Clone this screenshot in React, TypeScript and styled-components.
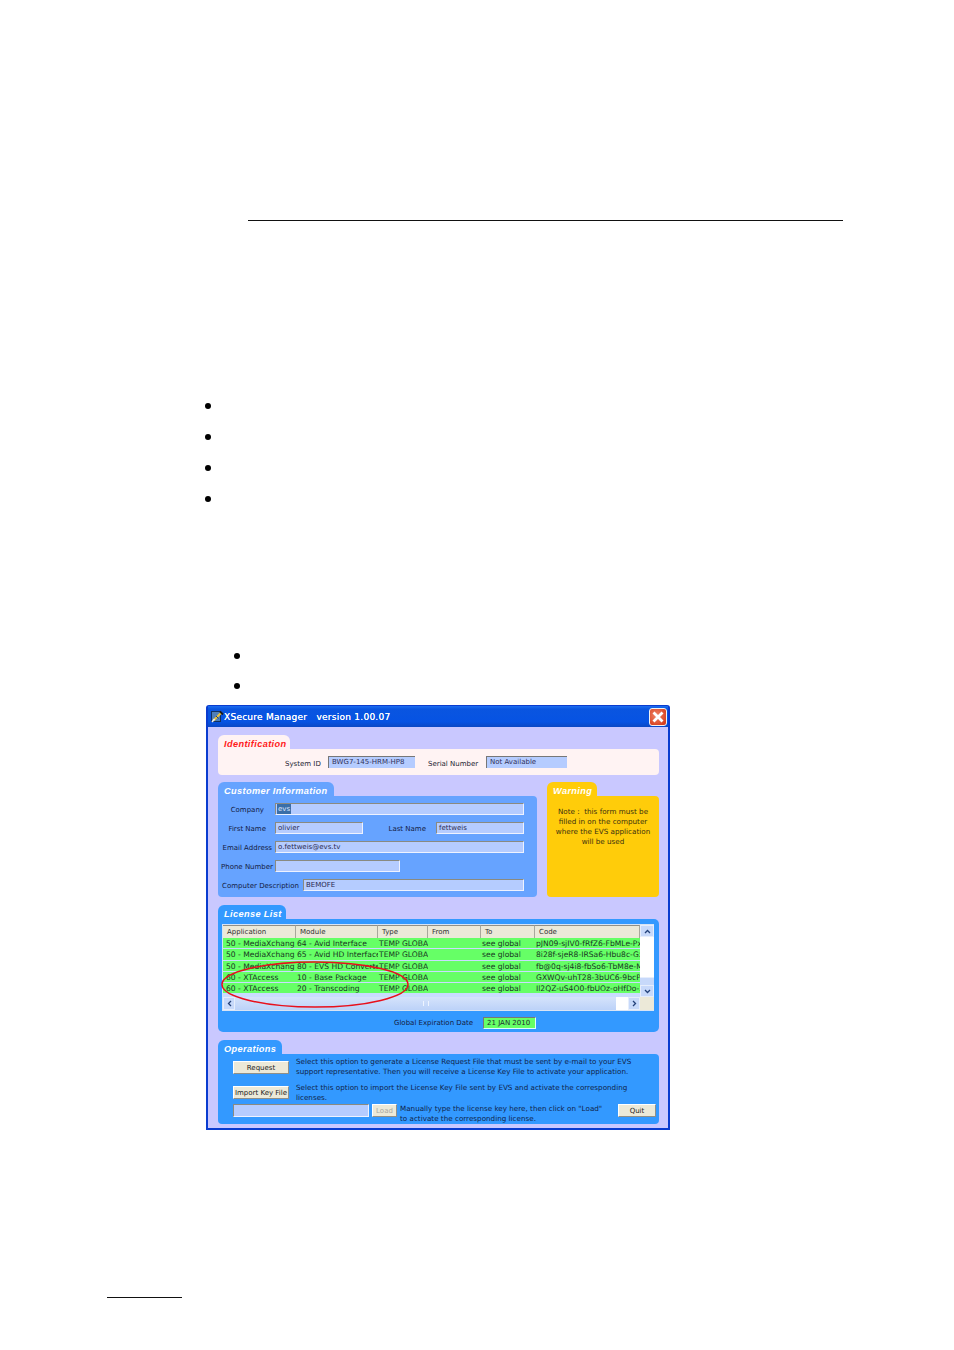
import React from 'react';
import styled, { createGlobalStyle } from 'styled-components';

const GlobalStyle = createGlobalStyle`
  html, body { margin: 0; padding: 0; background: #fff; }
  body { font-family: "DejaVu Sans", "Liberation Sans", sans-serif; }
`;

interface LicenseRow {
  application: string;
  module: string;
  type: string;
  to: string;
  code: string;
}

const licenseRows: LicenseRow[] = [
  { application: '50 - MediaXchang', module: '64 - Avid Interface', type: 'TEMP GLOBAL', to: 'see global', code: 'pJN09-sjIV0-fRfZ6-FbMLe-PxT2' },
  { application: '50 - MediaXchang', module: '65 - Avid HD Interface', type: 'TEMP GLOBAL', to: 'see global', code: '8i28f-sjeR8-IRSa6-Hbu8c-GxT2' },
  { application: '50 - MediaXchang', module: '80 - EVS HD Converter', type: 'TEMP GLOBAL', to: 'see global', code: 'fb@0q-sj4i8-fbSo6-TbM8e-MxT2' },
  { application: '60 - XTAccess', module: '10 - Base Package', type: 'TEMP GLOBAL', to: 'see global', code: 'GXWQv-uhT28-3bUC6-9bcPe-3xT2' },
  { application: '60 - XTAccess', module: '20 - Transcoding', type: 'TEMP GLOBAL', to: 'see global', code: 'Il2QZ-uS4O0-fbUOz-oHfDo-2xT2' },
];

const columns = '73px 82px 50px 53px 54px 105px';

const App: React.FC = () => (
  <Page>
    <GlobalStyle />
    <HeaderRule />
    <BulletList>
      <Bullet />
      <Bullet />
      <Bullet />
      <Bullet />
    </BulletList>
    <SubBulletList>
      <Bullet />
      <Bullet />
    </SubBulletList>

    <Window>
      <TitleBar>
        <svg width="13" height="13" viewBox="0 0 13 13">
          <rect x="0.5" y="1.5" width="9" height="10" fill="#4f7fb8" stroke="#12305f" />
          <path d="M2.5 10.5 L10 3" stroke="#e9c23c" strokeWidth="2.2" />
          <path d="M9 1.5 L12 4.5" stroke="#1b1b1b" strokeWidth="1.8" />
          <path d="M1 12 L3.5 9" stroke="#e8eef8" strokeWidth="1.6" />
          <path d="M5 6 L7.5 8.5" stroke="#26406e" strokeWidth="1" />
        </svg>
        <TitleText>XSecure Manager&nbsp;&nbsp; version 1.00.07</TitleText>
        <CloseButton>
          <svg width="12" height="12" viewBox="0 0 12 12">
            <path d="M1.5 1.5 L10.5 10.5 M10.5 1.5 L1.5 10.5" stroke="#fff" strokeWidth="2.8" />
          </svg>
        </CloseButton>
      </TitleBar>

      <WindowBody>
        <Section>
          <Tab $bg="#fff3f3" $fg="#ff1a1a" $w={72}>Identification</Tab>
          <IdentPanel>
            <FieldLabel>System ID</FieldLabel>
            <ReadOnlyField $w={87}>BWG7-145-HRM-HP8</ReadOnlyField>
            <SerialLabel>Serial Number</SerialLabel>
            <ReadOnlyField $w={81}>Not Available</ReadOnlyField>
          </IdentPanel>
        </Section>

        <MiddleRow>
          <CustomerSection>
            <Tab $bg="#66a3ff" $fg="#fff" $w={116}>Customer Information</Tab>
            <CustomerPanel>
              <FormRow>
                <FormLabel $w={57} $pad={11}>Company</FormLabel>
                <TextInput $w={249}><Selected>evs</Selected></TextInput>
              </FormRow>
              <FormRow>
                <FormLabel $w={57} $pad={9}>First Name</FormLabel>
                <TextInput $w={88}>olivier</TextInput>
                <FormLabel $w={73} $pad={10}>Last Name</FormLabel>
                <TextInput $w={88}>fettweis</TextInput>
              </FormRow>
              <FormRow>
                <FormLabel $w={57} $pad={3}>Email Address</FormLabel>
                <TextInput $w={249}>o.fettweis@evs.tv</TextInput>
              </FormRow>
              <FormRow>
                <FormLabel $w={57} $pad={2}>Phone Number</FormLabel>
                <TextInput $w={125} />
              </FormRow>
              <FormRow>
                <FormLabel $w={85} $pad={4}>Computer Description</FormLabel>
                <TextInput $w={221}>BEMOFE</TextInput>
              </FormRow>
            </CustomerPanel>
          </CustomerSection>

          <WarningSection>
            <Tab $bg="#ffcc0a" $fg="#fff" $w={50}>Warning</Tab>
            <WarningPanel>
              Note :&nbsp; this form must be
              <br />
              filled in on the computer
              <br />
              where the EVS application
              <br />
              will be used
            </WarningPanel>
          </WarningSection>
        </MiddleRow>

        <Section>
          <Tab $bg="#3399ff" $fg="#fff" $w={68}>License List</Tab>
          <LicensePanel>
            <TableFrame>
              <TableMain>
                <HeaderRow>
                  <HeaderCell>Application</HeaderCell>
                  <HeaderCell>Module</HeaderCell>
                  <HeaderCell>Type</HeaderCell>
                  <HeaderCell>From</HeaderCell>
                  <HeaderCell>To</HeaderCell>
                  <HeaderCell>Code</HeaderCell>
                </HeaderRow>
                {licenseRows.map((row) => (
                  <DataRow key={row.module}>
                    <Cell>{row.application}</Cell>
                    <Cell>{row.module}</Cell>
                    <Cell>{row.type}</Cell>
                    <Cell />
                    <Cell>{row.to}</Cell>
                    <Cell>{row.code}</Cell>
                  </DataRow>
                ))}
              </TableMain>
              <VerticalBar>
                <ScrollButton $h={12}>
                  <svg width="7" height="5" viewBox="0 0 7 5"><path d="M1 4 L3.5 1.5 L6 4" fill="none" stroke="#24427a" strokeWidth="1.3" /></svg>
                </ScrollButton>
                <VerticalTrack />
                <VerticalThumb />
                <ScrollButton $h={12}>
                  <svg width="7" height="5" viewBox="0 0 7 5"><path d="M1 1 L3.5 3.5 L6 1" fill="none" stroke="#24427a" strokeWidth="1.3" /></svg>
                </ScrollButton>
              </VerticalBar>
              <HorizontalBar>
                <ScrollButton $w={12}>
                  <svg width="5" height="7" viewBox="0 0 5 7"><path d="M4 1 L1.5 3.5 L4 6" fill="none" stroke="#24427a" strokeWidth="1.3" /></svg>
                </ScrollButton>
                <HorizontalThumb>
                  <Grip />
                </HorizontalThumb>
                <ScrollButton $w={12}>
                  <svg width="5" height="7" viewBox="0 0 5 7"><path d="M1 1 L3.5 3.5 L1 6" fill="none" stroke="#24427a" strokeWidth="1.3" /></svg>
                </ScrollButton>
                <ScrollCorner />
              </HorizontalBar>
              <RedCircle width="192" height="52" viewBox="0 0 192 52">
                <ellipse cx="96" cy="25.5" rx="93" ry="22.5" fill="none" stroke="#e8101c" strokeWidth="1.5" />
              </RedCircle>
            </TableFrame>
            <ExpirationRow>
              <span>Global Expiration Date</span>
              <ExpirationField>21 JAN 2010</ExpirationField>
            </ExpirationRow>
          </LicensePanel>
        </Section>

        <Section>
          <Tab $bg="#3399ff" $fg="#fff" $w={64}>Operations</Tab>
          <OperationsPanel>
            <OperationRow $h={26}>
              <WinButton $w={56}>Request</WinButton>
              <OperationText>
                Select this option to generate a License Request File that must be sent by e-mail to your EVS
                <br />
                support representative. Then you will receive a License Key File to activate your application.
              </OperationText>
            </OperationRow>
            <OperationRow $h={25}>
              <WinButton $w={56}>Import Key File</WinButton>
              <OperationText $top={1}>
                Select this option to import the License Key File sent by EVS and activate the corresponding
                <br />
                licenses.
              </OperationText>
            </OperationRow>
            <LastRow>
              <KeyInput />
              <WinButton $w={25} $disabled>Load</WinButton>
              <ManualText>
                Manually type the license key here, then click on "Load"
                <br />
                to activate the corresponding license.
              </ManualText>
              <QuitButton $w={38}>Quit</QuitButton>
            </LastRow>
          </OperationsPanel>
        </Section>
      </WindowBody>
    </Window>

    <FooterRule />
  </Page>
);

const Page = styled.div`
  width: 954px;
  height: 1350px;
  overflow: hidden;
  padding-top: 220px;
  box-sizing: border-box;
`;

const HeaderRule = styled.div`
  width: 595px;
  height: 1px;
  margin-left: 248px;
  background: #111;
`;

const BulletList = styled.div`
  display: flex;
  flex-direction: column;
  gap: 25px;
  margin: 182px 0 0 205px;
`;

const SubBulletList = styled.div`
  display: flex;
  flex-direction: column;
  gap: 24px;
  margin: 151px 0 0 234px;
`;

const Bullet = styled.div`
  width: 6px;
  height: 6px;
  border-radius: 50%;
  background: #000;
`;

const Window = styled.div`
  width: 464px;
  height: 425px;
  margin: 16px 0 0 206px;
  box-sizing: border-box;
  border: 2px solid #0a3ccf;
  border-top-width: 1px;
  border-radius: 3px 3px 0 0;
  background: #c9c8ff;
  display: flex;
  flex-direction: column;
`;

const TitleBar = styled.div`
  height: 21px;
  flex: none;
  display: flex;
  align-items: center;
  padding: 0 1px 0 3px;
  background: linear-gradient(180deg, #1c6df0 0%, #0a55e0 15%, #0653e3 75%, #0a48c4 100%);
`;

const TitleText = styled.span`
  flex: 1;
  padding-top: 1px;
  font-size: 9px;
  font-weight: 500;
  letter-spacing: 0.25px;
  color: #fff;
  white-space: nowrap;
  text-shadow: 0 0 0.5px #fff;
`;

const CloseButton = styled.div`
  width: 18px;
  height: 18px;
  box-sizing: border-box;
  border: 1px solid #f2f2f2;
  border-radius: 3px;
  background: radial-gradient(circle at 40% 40%, #f0886a, #d8401f 80%);
  display: flex;
  align-items: center;
  justify-content: center;
`;

const WindowBody = styled.div`
  flex: 1;
  display: flex;
  flex-direction: column;
  gap: 8px;
  padding: 8px 9px 4px 10px;
`;

const Section = styled.section`
  display: flex;
  flex-direction: column;
`;

const Tab = styled.div<{ $bg: string; $fg: string; $w: number }>`
  width: ${(p) => p.$w}px;
  height: 15px;
  margin-bottom: -1px;
  box-sizing: border-box;
  padding: 3px 0 0 6px;
  border-radius: 6px 6px 0 0;
  background: ${(p) => p.$bg};
  color: ${(p) => p.$fg};
  font-size: 9.2px;
  font-weight: 700;
  font-style: italic;
  line-height: 12px;
  white-space: nowrap;
  font-family: "Liberation Sans", Arial, sans-serif;
  letter-spacing: 0.38px;
`;

const IdentPanel = styled.div`
  height: 26px;
  margin-bottom: -1px;
  box-sizing: border-box;
  padding: 7px 0 0 67px;
  display: flex;
  align-items: flex-start;
  background: #fff3f3;
  border-radius: 0 4px 4px 4px;
  font-size: 7px;
  color: #1c1c30;
`;

const FieldLabel = styled.span`
  width: 43px;
  line-height: 17px;
  white-space: nowrap;
`;

const SerialLabel = styled.span`
  margin-left: 13px;
  width: 58px;
  line-height: 17px;
  white-space: nowrap;
`;

const ReadOnlyField = styled.div<{ $w: number }>`
  width: ${(p) => p.$w}px;
  height: 12px;
  box-sizing: border-box;
  padding-left: 3px;
  line-height: 11px;
  font-size: 7px;
  color: #30305a;
  background: #b5ccff;
  border-top: 1px solid #777;
  border-left: 1px solid #777;
  white-space: nowrap;
`;

const MiddleRow = styled.div`
  display: flex;
  gap: 10px;
`;

const CustomerSection = styled(Section)`
  width: 319px;
`;

const WarningSection = styled(Section)`
  width: 112px;
`;

const CustomerPanel = styled.div`
  height: 101px;
  box-sizing: border-box;
  padding-top: 7px;
  display: flex;
  flex-direction: column;
  gap: 7px;
  background: #66a3ff;
  border-radius: 0 4px 4px 4px;
`;

const FormRow = styled.div`
  display: flex;
  align-items: center;
  height: 12px;
`;

const FormLabel = styled.span<{ $w: number; $pad: number }>`
  width: ${(p) => p.$w}px;
  box-sizing: border-box;
  padding-top: 2px;
  padding-right: ${(p) => p.$pad}px;
  text-align: right;
  font-size: 7px;
  color: #14203f;
  white-space: nowrap;
`;

const TextInput = styled.div<{ $w: number }>`
  width: ${(p) => p.$w}px;
  height: 12px;
  box-sizing: border-box;
  padding-left: 2px;
  line-height: 11px;
  font-size: 7px;
  color: #2a2a50;
  background: #b5ccff;
  border-top: 1px solid #8a8a80;
  border-left: 1px solid #8a8a80;
  border-right: 1px solid #eef2ff;
  border-bottom: 1px solid #eef2ff;
  white-space: nowrap;
`;

const Selected = styled.span`
  display: inline-block;
  height: 10px;
  line-height: 10px;
  padding: 0 1px;
  margin-left: -1px;
  vertical-align: top;
  background: #3a6ea8;
  color: #dfe8ff;
`;

const WarningPanel = styled.div`
  height: 101px;
  box-sizing: border-box;
  padding-top: 11px;
  text-align: center;
  font-size: 7.2px;
  line-height: 10px;
  color: #3a3010;
  background: #ffcc0a;
  border-radius: 0 4px 4px 4px;
`;

const LicensePanel = styled.div`
  height: 113px;
  box-sizing: border-box;
  padding: 5px 5px 0 4px;
  background: #3399ff;
  border-radius: 0 5px 5px 5px;
`;

const TableFrame = styled.div`
  position: relative;
  display: grid;
  grid-template-columns: 417px 14px;
  grid-template-rows: 72px 13px;
  width: 432px;
  height: 87px;
  box-sizing: border-box;
  background: #fff;
  border: 1px solid #d8e4f5;
`;

const TableMain = styled.div`
  overflow: hidden;
  background: #c9dcff;
`;

const HeaderRow = styled.div`
  display: grid;
  grid-template-columns: ${columns};
  height: 13px;
  background: #ece9d8;
`;

const HeaderCell = styled.div`
  box-sizing: border-box;
  padding: 0 0 0 4px;
  font-size: 7px;
  line-height: 12px;
  color: #303030;
  border-top: 1px solid #8f8f88;
  border-right: 1px solid #a8a89c;
  white-space: nowrap;
`;

const DataRow = styled.div`
  display: grid;
  grid-template-columns: ${columns};
  height: 10.3px;
  margin-bottom: 1px;
  background: #66ff66;
`;

const Cell = styled.div`
  overflow: hidden;
  padding-left: 1px;
  font-size: 7.6px;
  line-height: 11px;
  color: #16361f;
  white-space: nowrap;

  &:first-child {
    padding-left: 3px;
  }
`;

const VerticalBar = styled.div`
  display: flex;
  flex-direction: column;
  background: #fff;
`;

const ScrollButton = styled.div<{ $w?: number; $h?: number }>`
  flex: none;
  width: ${(p) => (p.$w ? `${p.$w}px` : 'auto')};
  height: ${(p) => (p.$h ? `${p.$h}px` : 'auto')};
  display: flex;
  align-items: center;
  justify-content: center;
  background: #c7d9fa;
  border: 1px solid #e6eefc;
  box-sizing: border-box;
`;

const VerticalTrack = styled.div`
  flex: 1;
  background: #fff;
`;

const VerticalThumb = styled.div`
  height: 7px;
  background: #c7d9fa;
  border-top: 1px solid #e6eefc;
`;

const HorizontalBar = styled.div`
  grid-column: 1 / 3;
  display: flex;
  background: #fff;
`;

const HorizontalThumb = styled.div`
  flex: 1;
  display: flex;
  align-items: center;
  justify-content: center;
  margin-right: 12px;
  background: linear-gradient(180deg, #d5e3fb, #bcd2f8);
`;

const Grip = styled.div`
  width: 4px;
  height: 5px;
  border-left: 1px solid #eef4ff;
  border-right: 1px solid #eef4ff;
`;

const ScrollCorner = styled.div`
  width: 14px;
  flex: none;
  background: #ece9d8;
`;

const RedCircle = styled.svg`
  position: absolute;
  left: -4px;
  top: 34px;
  overflow: visible;
  pointer-events: none;
`;

const ExpirationRow = styled.div`
  display: flex;
  align-items: center;
  margin: 5px 0 0 172px;
  font-size: 7px;
  line-height: 14px;
  color: #14203f;
  white-space: nowrap;
  gap: 10px;
`;

const ExpirationField = styled.div`
  width: 53px;
  height: 12px;
  box-sizing: border-box;
  padding-left: 3px;
  line-height: 11px;
  background: #66ff66;
  border: 1px solid #777;
  border-right-color: #dff;
  border-bottom-color: #dff;
  color: #1c2a30;
`;

const OperationsPanel = styled.div`
  height: 70px;
  box-sizing: border-box;
  padding: 3px 3px 0 15px;
  display: flex;
  flex-direction: column;
  background: #3399ff;
  border-radius: 0 4px 4px 4px;
  font-size: 7.2px;
  color: #0f1f4a;
`;

const OperationRow = styled.div<{ $h: number }>`
  display: flex;
  height: ${(p) => p.$h}px;
`;

const OperationText = styled.div<{ $top?: number }>`
  margin: ${(p) => p.$top ?? 0}px 0 0 7px;
  line-height: 10px;
  white-space: nowrap;
`;

const WinButton = styled.div<{ $w: number; $disabled?: boolean }>`
  width: ${(p) => p.$w}px;
  height: 13px;
  flex: none;
  margin-top: 4px;
  box-sizing: border-box;
  text-align: center;
  line-height: 12px;
  font-size: 7px;
  white-space: nowrap;
  overflow: hidden;
  color: ${(p) => (p.$disabled ? '#a8a8a0' : '#1c1c20')};
  background: #ece9d8;
  border: 1px solid;
  border-color: #fff #8f8f88 #8f8f88 #fff;
`;

const LastRow = styled.div`
  display: flex;
  align-items: flex-start;
  margin-top: -5px;

  ${WinButton} {
    margin-top: 2px;
  }
`;

const KeyInput = styled.div`
  width: 136px;
  height: 13px;
  flex: none;
  margin: 2px 3px 0 0;
  box-sizing: border-box;
  background: #b5ccff;
  border: 1px solid #eef2ff;
  border-top-color: #8a8a80;
  border-left-color: #8a8a80;
`;

const ManualText = styled.div`
  flex: 1;
  margin: 2px 0 0 3px;
  line-height: 10px;
  white-space: nowrap;
`;

const QuitButton = styled(WinButton)``;

const FooterRule = styled.div`
  width: 75px;
  height: 1px;
  margin: 167px 0 0 107px;
  background: #111;
`;

export default App;
